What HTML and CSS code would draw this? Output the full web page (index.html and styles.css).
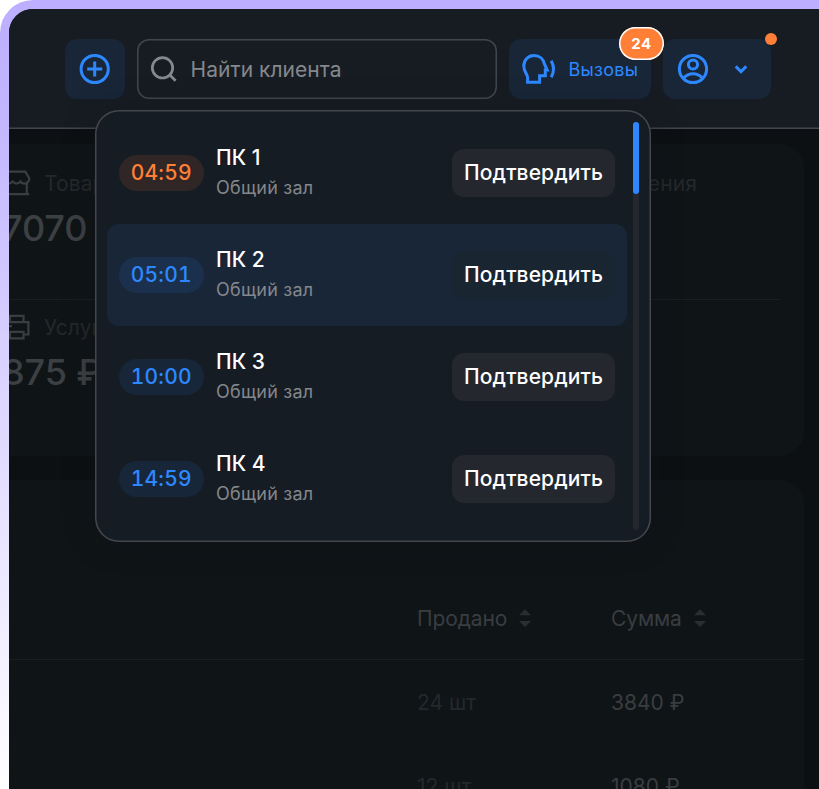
FILE: index.html
```html
<!DOCTYPE html>
<html lang="ru">
<head>
<meta charset="utf-8">
<title>Вызовы</title>
<link rel="stylesheet" href="styles.css">
</head>
<body>
<div class="frame">
<div class="screen">
  <header class="topbar">
    <button class="tile add" aria-label="Добавить">
      <svg width="36" height="36" viewBox="0 0 36 36" fill="none" stroke="currentColor" stroke-width="3"><circle cx="17.7" cy="18" r="13.6"/><path d="M17.7 10.5v15M10.2 18h15"/></svg>
    </button>
    <div class="search">
      <svg width="36" height="36" viewBox="0 0 36 36" fill="none" stroke="currentColor" stroke-width="2.7"><circle cx="15.5" cy="16.8" r="10.2"/><path d="M22.6 23.8l6 5.9"/></svg>
      <span>Найти клиента</span>
    </div>
    <button class="tile calls">
      <svg width="36" height="36" viewBox="0 0 36 36" fill="none" stroke="currentColor" stroke-width="3"><path d="M7.6 31.3V26.5C7.6 23 3.8 21.5 3.8 15C3.8 9 8.2 4.5 14 4.5C19.5 4.5 23.5 8 24.4 13L27.2 18.9H25.3V24.8H19.6V31.3Z"/><path d="M31.2 9.7Q35.8 18 31.2 26.3"/></svg>
      <span>Вызовы</span>
      <b class="badge">24</b>
    </button>
    <button class="tile profile" aria-label="Профиль">
      <svg width="36" height="36" viewBox="0 0 36 36" fill="none" stroke="currentColor" stroke-width="3"><circle cx="18" cy="18" r="13.6"/><circle cx="18" cy="13.5" r="4.6"/><path d="M8.3 27.3Q12.5 22.8 18 22.8T27.7 27.3"/></svg>
      <svg class="chev" width="18" height="18" viewBox="0 0 18 18" fill="none" stroke="currentColor" stroke-width="3"><path d="M3.7 6.4L9 11.6L14.3 6.4"/></svg>
      <i class="dot"></i>
    </button>
  </header>

  <main class="content">
    <section class="card stats">
      <div class="stat">
        <div class="label">
          <svg width="30" height="30" viewBox="0 0 30 30" fill="none" stroke="currentColor" stroke-width="2.2"><path d="M6 3.6H23.3L27.2 10V12Q25.5 15.6 22.5 15.6T18.5 13.5Q16.5 15.6 14.5 15.6T10.5 13.5Q8.5 15.6 6.5 15.6T2.5 13V9.5ZM4.5 16V25.8M24.8 15V25.8M2 26.2H27.2"/></svg>
          <span>Товары</span>
        </div>
        <div class="value">7070 ₽</div>
      </div>
      <div class="stat topup"><div class="label"><span>Пополнения</span></div></div>
      <div class="stat second">
        <div class="label">
          <svg width="30" height="30" viewBox="0 0 30 30" fill="none" stroke="currentColor" stroke-width="2.2"><path d="M8 10V3.8H21.5V10M8 22.5H3V10.2H26.4V22.5H21.5M8 19.8H21.5V26.4H8ZM7 14.2H10"/></svg>
          <span>Услуги</span>
        </div>
        <div class="value">875 ₽</div>
      </div>
    </section>
    <section class="card table">
      <div class="row head">
        <div>Продано <svg width="12" height="18" viewBox="0 0 12 18" fill="currentColor"><path d="M0 6.3L6 .3L12 6.3ZM0 12H12L6 18Z"/></svg></div>
        <div>Сумма <svg width="12" height="18" viewBox="0 0 12 18" fill="currentColor"><path d="M0 6.3L6 .3L12 6.3ZM0 12H12L6 18Z"/></svg></div>
      </div>
      <div class="row"><div class="qty">24 шт</div><div>3840 ₽</div></div>
      <div class="row"><div class="qty">12 шт</div><div>1080 ₽</div></div>
    </section>
  </main>

  <div class="menu">
    <ul class="list">
      <li class="urgent"><time>04:59</time><div class="who"><strong>ПК 1</strong><small>Общий зал</small></div><button>Подтвердить</button></li>
      <li class="active"><time>05:01</time><div class="who"><strong>ПК 2</strong><small>Общий зал</small></div><button>Подтвердить</button></li>
      <li><time>10:00</time><div class="who"><strong>ПК 3</strong><small>Общий зал</small></div><button>Подтвердить</button></li>
      <li><time>14:59</time><div class="who"><strong>ПК 4</strong><small>Общий зал</small></div><button>Подтвердить</button></li>
    </ul>
    <div class="track"><div class="thumb"></div></div>
  </div>
</div>
</div>
</body>
</html>
```
FILE: styles.css
```css
* { box-sizing: border-box; }
body { margin: 0; background: #fff; font-family: Inter, "Noto Sans", sans-serif; overflow: hidden; }
button { border: 0; padding: 0; font: inherit; color: inherit; }
svg { flex: none; display: block; }

.frame { height: 789px; padding: 9px 0 0 9px; border-top-left-radius: 33px; background: linear-gradient(#bdaeff 0, #c3b7ff 130px, #ddd6ff 400px, #fff 789px); }
.screen { position: relative; height: 780px; overflow: hidden; background: #0c1013; border-top-left-radius: 24px; }

.topbar { height: 120px; padding: 30px 48px 0 56px; display: flex; align-items: flex-start; background: #171c23; box-shadow: inset 0 -1.5px #43464c; }
.tile { position: relative; height: 60px; display: flex; align-items: center; border-radius: 12px; background: #182638; color: #2d88ff; }
.add { width: 60px; justify-content: center; margin-right: 11.5px; }
.search { width: 360px; height: 60px; margin-right: 12px; padding-left: 10px; display: flex; align-items: center; gap: 8px; border-radius: 12px; box-shadow: inset 0 0 0 1.5px #43464c; color: #85888c; font-size: 21px; letter-spacing: .05px; }
.calls { width: 142px; margin-right: 12.5px; padding-left: 11.5px; gap: 12.5px; font-size: 18px; letter-spacing: .25px; }
.profile { width: 108px; padding-left: 12px; }
.chev { margin-left: 21px; }
.badge { position: absolute; right: -13.5px; top: -12px; width: 45px; height: 33px; display: grid; place-items: center; border-radius: 17px; background: #ff7f37; box-shadow: inset 0 0 0 1.5px #fff; color: #fff; font-size: 15px; font-weight: 700; letter-spacing: .5px; }
.dot { position: absolute; right: -6px; top: -6px; width: 12px; height: 12px; border-radius: 50%; background: #ff7f37; }

.content { padding-top: 15px; display: flex; flex-direction: column; gap: 24px; margin: 0 15px 0 -30px; }
.card { border-radius: 24px; background: #0f1417; }
.stats { height: 312px; padding: 24px 24px 0 23px; display: grid; grid-template-columns: 1fr auto; grid-template-rows: 131px 1fr; }
.topup { padding-right: 83px; }
.second { grid-column: 1 / 3; border-top: 1px solid #1b1f22; padding-top: 12px; }
.label { height: 30px; display: flex; align-items: center; gap: 12px; color: #3b3e41; font-size: 21px; letter-spacing: .1px; }
.label span { color: #25282b; }
.value { margin-top: 8px; line-height: 44px; color: #3d4043; font-size: 36px; font-weight: 500; letter-spacing: -.1px; }

.table { height: 340px; padding-top: 96px; color: #3a3d40; font-size: 21px; }
.row { height: 84px; padding-left: 438px; display: grid; grid-template-columns: 194px 1fr; align-items: center; letter-spacing: 0; }
.row.head { border-bottom: 1px solid #1b1f22; padding-top: 1px; letter-spacing: -.1px; }
.row div { display: flex; align-items: center; gap: 12px; }
.row svg { color: #2b2e31; }
.row .qty { color: #25282b; }

.menu { position: absolute; left: 85.5px; top: 100.5px; width: 556.5px; height: 432px; padding: 12px; display: flex; gap: 6px; border-radius: 24px; background: #161c23; box-shadow: inset 0 0 0 1.5px #43464c, 0 0 30px rgba(20, 18, 20, .35); }
.list { width: 520.5px; margin: 0; padding: 0; list-style: none; }
.list li { height: 102px; padding: 0 12px; display: flex; align-items: center; border-radius: 12px; }
.list time { width: 85.5px; height: 36px; display: grid; place-items: center; border-radius: 18px; background: #182639; color: #2d88ff; font-size: 21px; font-weight: 500; font-variant-numeric: tabular-nums; letter-spacing: .2px; }
.list .urgent time { background: #302625; color: #ff7f37; }
.list .active { background: #192638; }
.list .active time { background: #1b304c; }
.who { flex: 1; margin-left: 12px; color: #fff; }
.who strong, .who small { display: block; line-height: 30px; }
.who strong { font-size: 21px; font-weight: 500; }
.who small { color: #84878c; font-size: 18px; letter-spacing: .25px; }
.list button { width: 163px; height: 48px; border-radius: 12px; background: #24272e; color: #fff; font-size: 21px; font-weight: 500; letter-spacing: .1px; }
.list .active button { background: #1a2532; }
.track { width: 6px; height: 408px; border-radius: 3px; background: #24272e; }
.thumb { height: 72.5px; border-radius: 3px; background: #2d88ff; }
```
